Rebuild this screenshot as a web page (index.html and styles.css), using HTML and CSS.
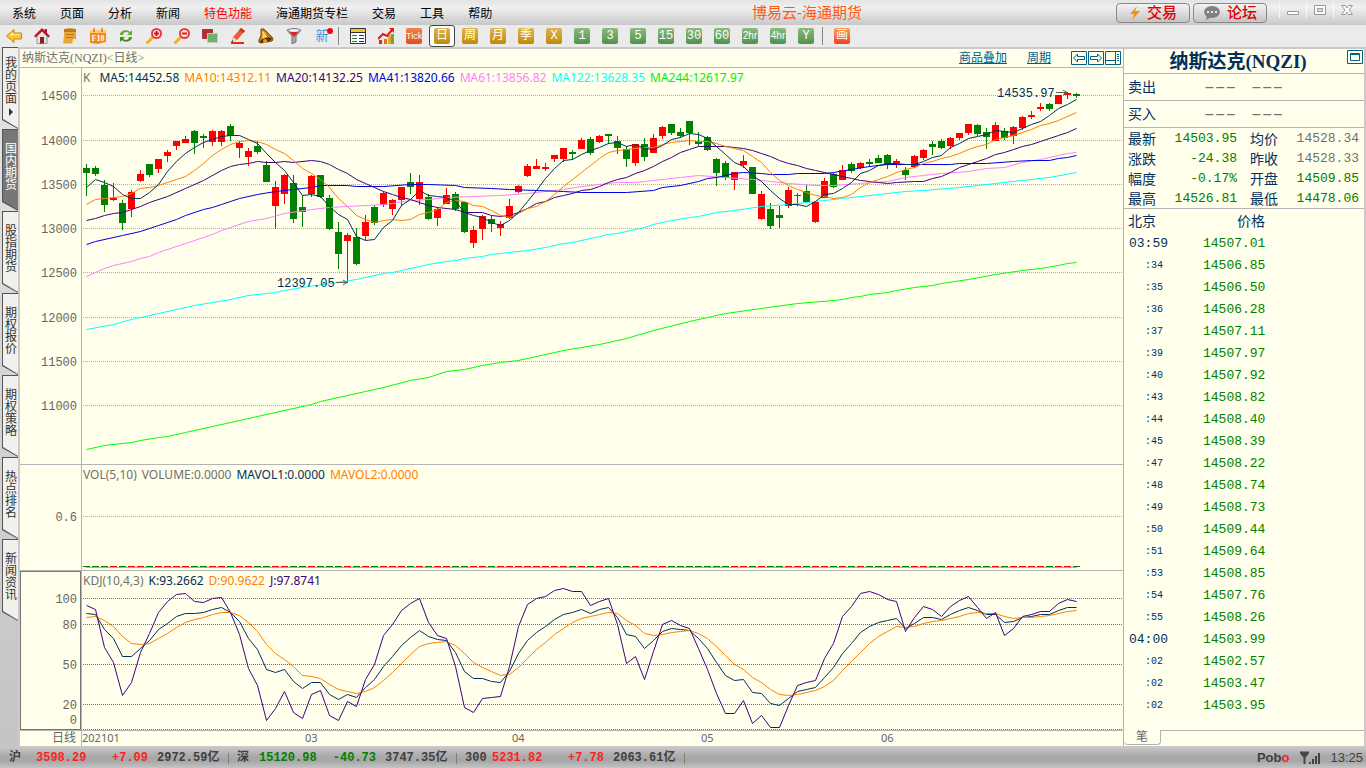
FILE: index.html
```html
<!DOCTYPE html>
<html lang="zh-CN">
<head>
<meta charset="utf-8">
<title>博易云-海通期货</title>
<link rel="stylesheet" href="styles.css">
</head>
<body>
<header class="menubar">
  <nav class="menu">
    <button>系统</button><button>页面</button><button>分析</button><button>新闻</button><button class="hot">特色功能</button><button>海通期货专栏</button><button>交易</button><button>工具</button><button>帮助</button>
  </nav>
  <h1 class="app-title">博易云-海通期货</h1>
  <div class="top-actions">
    <button class="pill"><svg width="12" height="14" viewBox="0 0 12 14"><path d="M8 0L1 8h4l-2 6 8-9H6z" fill="#f09018"/></svg>交易</button>
    <button class="pill"><svg width="18" height="14" viewBox="0 0 18 14"><ellipse cx="9" cy="6" rx="8" ry="6" fill="#808080"/><path d="M4 9l-1 5 6-3z" fill="#808080"/><path d="M4 5h2v2H4zM8 5h2v2H8zM12 5h2v2h-2z" fill="#e8e8e8"/></svg>论坛</button>
  </div>
  <div class="window-buttons">
    <button aria-label="最小化"><svg width="12" height="12" viewBox="0 0 12 12"><path d="M.5 7.500h11v3H.5z" fill="#fff" stroke="#999"/></svg></button>
    <button aria-label="还原"><svg width="12" height="12" viewBox="0 0 12 12"><path d="M.5 1.500h11v9H.5z" fill="#fff" stroke="#999"/><path d="M3.500 4.500h5v3h-5z" fill="#ddd" stroke="#999"/></svg></button>
    <button aria-label="关闭"><svg width="12" height="12" viewBox="0 0 12 12"><path d="M.5 1.500h4L6 4l1.500-2.500h4L8 6l3.500 4.500h-4L6 8l-1.500 2.500h-4L4 6z" fill="#fff" stroke="#999"/></svg></button>
  </div>
</header>

<div class="toolbar">
  <button aria-label="后退"><svg width="16" height="16" viewBox="0 0 16 16"><path d="M.5 8L8 1.500V5h7.500v6H8v3.500z" fill="#fbc52c" stroke="#c98a10"/><path d="M3 7.500L7 4v2h7v1z" fill="#ffec9a"/></svg></button>
  <button aria-label="首页"><svg width="16" height="16" viewBox="0 0 16 16"><path d="M3 8l5-5 5 5v7.500H3z" fill="#e4e4ea" stroke="#999"/><path d="M0 8L8 0l2.500 2.500V1H13v4l3 3-1.500 1.500L8 3.500 1.500 9.500z" fill="#b81a24"/><path d="M6 9h4v6.500H6z" fill="#8a2020"/></svg></button>
  <button aria-label="便签"><svg width="16" height="16" viewBox="0 0 16 16"><path d="M2 1q6-1 12 0v10l-4 4.500H3L1 15q1.500-7 1-14z" fill="#e5a93a"/><path d="M2 1q6-1 12 0v3H2z" fill="#c07a16"/><path d="M4 6.500h8M4 9.500h7" stroke="#b87818"/><path d="M10 15.500l1-4.500h3z" fill="#ffe6a0"/></svg></button>
  <button aria-label="F10"><svg width="18" height="16" viewBox="0 0 18 16"><path d="M1 2h16v12l-8 2-8-1z" fill="#ef8a1e"/><path d="M1 2h16v3H1z" fill="#ffc873"/><path d="M5 0v4M13 0v4" stroke="#a85008"/><text class="f10" x="9" y="13" text-anchor="middle">F10</text></svg></button>
  <button aria-label="刷新"><svg width="16" height="16" viewBox="0 0 16 16"><path d="M2 7c0-5 8-6 10-3l2-2v5H9l2-1.500C9 3 5 4 5 7z" fill="#5fae2c"/><path d="M14 9c0 5-8 6-10 3l-2 2V9h5l-2 1.500c2 2.500 6 1.500 6-1.500z" fill="#3f8e1c"/></svg></button>
  <button aria-label="放大"><svg width="16" height="16" viewBox="0 0 16 16"><path d="M1.500 14.500L7 9" stroke="#f5b020" stroke-width="3" stroke-linecap="round"/><circle cx="10.500" cy="5.500" r="4.500" fill="#ffeaea" stroke="#e23c3c" stroke-width="2"/><path d="M8 5.500h5M10.500 3v5" stroke="#d01818" stroke-width="2"/></svg></button>
  <button aria-label="缩小"><svg width="16" height="16" viewBox="0 0 16 16"><path d="M1.500 14.500L7 9" stroke="#f5b020" stroke-width="3" stroke-linecap="round"/><circle cx="10.500" cy="5.500" r="4.500" fill="#ffeaea" stroke="#e23c3c" stroke-width="2"/><path d="M8 5.500h5" stroke="#d01818" stroke-width="2"/></svg></button>
  <button aria-label="叠加"><svg width="16" height="16" viewBox="0 0 16 16"><path d="M.5 1.500h10v9H.5z" fill="#b82c34" stroke="#98383c"/><path d="M5.500 5.500h10v9h-10z" fill="#72ae72" stroke="#b8d4b8"/></svg></button>
  <button aria-label="画笔"><svg width="16" height="16" viewBox="0 0 16 16"><path d="M2 13l1-4 8-9 4 3-8 9z" fill="#ee5a3c"/><path d="M3 9l4 3-5 2z" fill="#f8d8a8"/><path d="M1 14l2-2v2z" fill="#333"/><path d="M11 0l4 3-2 2-4-3z" fill="#d03018"/><path d="M1 15h13" stroke="#e22c10" stroke-width="2"/></svg></button>
  <button aria-label="预警"><svg width="16" height="16" viewBox="0 0 16 16"><path d="M3 1q3-1 5 2l6 6q2 3 0 4L3 15q-3 0-2-3 3-4 2-11z" fill="#c87a14" stroke="#7a4808"/><path d="M4 3q3 0 5 6l-5 2q1-4 0-8z" fill="#ffd05c"/><ellipse cx="8" cy="12" rx="6" ry="2" transform="rotate(-14 8 12)" fill="#5a3008"/><circle cx="7" cy="13" r="2" fill="#e8a028"/></svg></button>
  <button aria-label="筛选"><svg width="16" height="16" viewBox="0 0 16 16"><path d="M1 2h14L10 8v6l-4 2V8z" fill="#a8a8a8" stroke="#707070"/><ellipse cx="8" cy="2.500" rx="6" ry="2" fill="#eee" stroke="#777"/><path d="M4 4h8L8 9z" fill="#e02020"/></svg></button>
  <button class="new-mark">新<i></i></button>
  <span class="sep"></span>
  <button aria-label="报价"><svg width="16" height="16" viewBox="0 0 16 16"><path d="M.5.500h15v15H.5z" fill="#fff" stroke="#333"/><path d="M1 1h14v3H1z" fill="#f3c22c"/><path d="M1 4.500h14" stroke="#333"/><path d="M2 7.500h5M2 10.500h5M2 13.500h5" stroke="#1a8a30" /><path d="M9 7.500h5M9 10.500h5M9 13.500h5" stroke="#1a30b0"/></svg></button>
  <button aria-label="走势"><svg width="16" height="16" viewBox="0 0 16 16"><path d="M1 12h3v4H1z" fill="#d43020"/><path d="M6 11h3v5H6z" fill="#e07020"/><path d="M10 7h3v9h-3z" fill="#e6a82a"/><path d="M13 6h3v10h-3z" fill="#6aa83a"/><path d="M0 11l5-5 4 2 5-6" fill="none" stroke="#e81818" stroke-width="2"/><path d="M11 0h5v5z" fill="#e81818"/></svg></button>
  <button class="tile tick"><b>Tick</b></button>
  <button class="tile gold on"><b>日</b></button><button class="tile gold"><b>周</b></button><button class="tile gold"><b>月</b></button><button class="tile gold"><b>季</b></button><button class="tile gold"><b>X</b></button>
  <button class="tile green"><b>1</b></button><button class="tile green"><b>3</b></button><button class="tile green"><b>5</b></button><button class="tile green"><b>15</b></button><button class="tile green"><b>30</b></button><button class="tile green"><b>60</b></button><button class="tile green hr"><b>2hr</b></button><button class="tile green hr"><b>4hr</b></button><button class="tile green"><b>Y</b></button>
  <span class="sep"></span>
  <button class="tile draw"><b>画</b></button>
</div>

<main class="main">
  <nav class="side-tabs">
    <button class="first"><span>我的页面</span><svg width="6" height="8" viewBox="0 0 6 8"><path d="M1 0l4 4-4 4z" fill="#333"/></svg></button><button class="on"><span>国内期货</span></button><button><span>股指期货</span></button><button><span>期权报价</span></button><button><span>期权策略</span></button><button><span>热点排名</span></button><button><span>新闻资讯</span></button>
  </nav>

  <section class="chart">
    <div class="chart-head">
      <h2>纳斯达克(NQZI)&lt;日线&gt;</h2>
      <div class="chart-links">
        <a href="#overlay">商品叠加</a><a href="#period">周期</a>
        <div class="head-icons">
          <button aria-label="向左"><svg width="16" height="14" viewBox="0 0 16 14"><path d="M.5.500h15v13H.5z"/><path d="M2.500 7l4-4v2.500h7v3h-7V11z"/></svg></button>
          <button aria-label="向右"><svg width="16" height="14" viewBox="0 0 16 14"><path d="M.5.500h15v13H.5z"/><path d="M13.500 7l-4-4v2.500h-7v3h7V11z"/></svg></button>
          <button aria-label="分栏"><svg width="16" height="14" viewBox="0 0 16 14"><path d="M.5.500h15v13H.5zM10.500.500v13M.5 9.500h10M12 3.500h2M12 5.500h2M12 7.500h2M12 9.500h2"/></svg></button>
        </div>
      </div>
    </div>

    <div class="panel k-panel">
      <svg class="axis" viewBox="20 68 61 396" preserveAspectRatio="none" data-ticks="14500:95 14000:140 13500:184 13000:228 12500:272 12000:317 11500:361 11000:405"></svg>
      <div class="plot">
        <p class="legend"><span>K</span><span class="c-navy wide">MA5:14452.58</span><span class="c-orange">MA10:14312.11</span><span class="c-purple">MA20:14132.25</span><span class="c-blue">MA41:13820.66</span><span class="c-pink">MA61:13856.82</span><span class="c-cyan">MA122:13628.35</span><span class="c-lime">MA244:12617.97</span></p>
        <svg id="k" viewBox="82 68 1041 396" preserveAspectRatio="none"></svg>
      </div>
    </div>
    <div class="panel vol-panel">
      <svg class="axis" viewBox="20 465 61 105" preserveAspectRatio="none" data-ticks="0.6:516"></svg>
      <div class="plot">
        <p class="legend"><span>VOL(5,10)</span><span>VOLUME:0.0000</span><span class="c-navy">MAVOL1:0.0000</span><span class="c-orange">MAVOL2:0.0000</span></p>
        <svg id="vol" viewBox="82 465 1041 105" preserveAspectRatio="none"></svg>
      </div>
    </div>
    <div class="panel kdj-panel">
      <svg class="axis" viewBox="20 571 61 159" preserveAspectRatio="none" data-ticks="100:598 80:624 50:664 20:704 0:719"></svg>
      <div class="plot">
        <p class="legend"><span>KDJ(10,4,3)</span><span class="c-navy">K:93.2662</span><span class="c-orange">D:90.9622</span><span class="c-purple">J:97.8741</span></p>
        <svg id="kdj" viewBox="82 571 1041 159" preserveAspectRatio="none"></svg>
      </div>
    </div>
    <div class="dates">
      <span class="unit">日线</span>
      <svg viewBox="82 731 1041 15" preserveAspectRatio="none"><text x="82" y="742">202101</text><text x="305" y="742">03</text><text x="512" y="742">04</text><text x="701" y="742">05</text><text x="881" y="742">06</text></svg>
    </div>
  </section>

  <aside class="quote">
    <div class="quote-title"><h2>纳斯达克(NQZI)</h2><button aria-label="展开"><svg width="16" height="14" viewBox="0 0 16 14"><path d="M.5.500h15v13H.5zM3.500 3.500h9v7h-9zM3.500 4.500h9"/></svg></button></div>
    <div class="bid"><span>卖出</span><span class="dash">–––</span><span class="dash">–––</span></div>
    <div class="bid"><span>买入</span><span class="dash">–––</span><span class="dash">–––</span></div>
    <table class="stats">
      <tr><th>最新</th><td>14503.95</td><th>均价</th><td class="flat">14528.34</td></tr>
      <tr><th>涨跌</th><td>-24.38</td><th>昨收</th><td class="flat">14528.33</td></tr>
      <tr><th>幅度</th><td>-0.17%</td><th>开盘</th><td>14509.85</td></tr>
      <tr><th>最高</th><td>14526.81</td><th>最低</th><td>14478.06</td></tr>
    </table>
    <table class="ticks">
      <thead><tr><th>北京</th><th class="price">价格</th></tr></thead>
      <tbody id="ticks"></tbody>
    </table>
    <div class="quote-foot"><button>笔</button><span></span></div>
  </aside>
</main>

<footer class="status">
  <span class="name">沪</span><span class="idx up">3598.29</span><span class="chg up">+7.09</span><span class="amt">2972.59亿</span><i></i>
  <span class="name short">深</span><span class="idx long down">15120.98</span><span class="chg down">-40.73</span><span class="amt">3747.35亿</span><i></i>
  <span class="name">300</span><span class="idx up">5231.82</span><span class="chg up">+7.78</span><span class="amt">2063.61亿</span><i></i>
  <span class="brand">Pob<em>o</em></span>
  <svg width="22" height="14" viewBox="0 0 22 14"><path d="M1 1.500h9M5.500 1v12M2 2l3.500 4L9 2" fill="none" stroke="#444" stroke-width="2"/><path d="M10 11h2v2h-2zM13 8h2v5h-2zM16 5h2v8h-2zM19 2h2v11h-2z" fill="#444"/></svg>
  <time>13:25</time>
</footer>
<script src="chart.js"></script>
</body>
</html>
```

FILE: styles.css
```css
* { box-sizing: border-box; }
body { margin: 0; height: 100vh; display: flex; flex-direction: column; overflow: hidden; background: #e9e9e9; color: #000; font: 12px/14px "Liberation Sans", "Noto Sans CJK SC", sans-serif; }
button { margin: 0; padding: 0; border: 0; background: none; color: inherit; font: inherit; }
h1, h2, p { margin: 0; font-weight: normal; }
svg { display: block; }

.menubar { flex: none; height: 25px; display: flex; align-items: center; background: linear-gradient(#e4e4e4, #f0f0f0 30%, #c8c8c8); }
.menu { display: flex; gap: 24px; padding: 2px 0 0 12px; }
.hot { color: #f00; }
.app-title { flex: 1; padding-left: 6px; text-align: center; color: #ff5a14; font-size: 15px; line-height: 20px; }
.top-actions { display: flex; gap: 3px; }
.pill { width: 74px; height: 20px; display: flex; align-items: center; justify-content: center; gap: 6px; border: 1px solid #888; border-radius: 4px; background: linear-gradient(#f4f4f4, #dcdcdc 50%, #c4c4c4); color: #e00000; font-size: 15px; font-weight: 500; }
.window-buttons { display: flex; padding: 0 6px 6px 12px; }
.window-buttons button { width: 27px; height: 16px; display: flex; align-items: center; justify-content: center; border-left: 1px solid #f8f8f8; }

.toolbar { flex: none; height: 22px; display: flex; align-items: center; background: #ebebeb; }
.toolbar button { width: 28px; height: 22px; display: flex; align-items: center; justify-content: center; }
.f10 { font: bold 8px "Liberation Serif", serif; fill: #fff; }
.sep { width: 8px; height: 18px; border-left: 1px solid #888; margin-left: 2px; margin-right: -2px; }
.new-mark { position: relative; color: #4a90d8; font-size: 13px; }
.new-mark i { position: absolute; top: 3px; right: 3px; width: 6px; height: 6px; border-radius: 50%; background: #f00; }
.tile b { width: 16px; height: 16px; border-radius: 2px; color: #fff; text-align: center; font: 12px/17px "Liberation Mono", "Noto Sans CJK SC", monospace; }
.gold b { background: linear-gradient(#dcb450, #c08a08); }
.green b { background: linear-gradient(#8cba80, #50924a); }
.tick b { background: linear-gradient(#f0824c, #e0501c); font: 9px/16px "Liberation Sans", sans-serif; }
.hr b { font: 10px/16px "Liberation Sans", sans-serif; }
.draw b { background: linear-gradient(#ffa050, #f04020); }
.toolbar .on { width: 26px; margin: 0 1px; border: 1px solid #444; border-radius: 3px; background: #fff; }

.main { flex: 1; min-height: 0; display: grid; grid-template-columns: 18px minmax(0, 1fr) 243px; }
.side-tabs { background: linear-gradient(#e4e4e4, #c4c4c4); }
.side-tabs button { width: 18px; height: 82px; padding: 14px 0 0 5px; display: flex; flex-direction: column; align-items: flex-start; justify-content: flex-start; color: #333; background: #555; clip-path: polygon(2px 0, 100% 0, 100% 100%, 2px 73px); position: relative; }
.side-tabs button::before { content: ""; position: absolute; inset: 1px 0 0 3px; background: #f0f0ec; clip-path: polygon(0 0, 100% 0, 100% 80px, 0 71px); }
.side-tabs span { position: relative; display: block; width: 12px; font-size: 12px; line-height: 12px; word-break: break-all; }
.side-tabs svg { position: relative; margin: 3px 0 0 3px; }
.side-tabs .first { padding-top: 10px; }
.side-tabs .on { color: #fff; }
.side-tabs .on::before { background: #777; }

.chart { display: flex; flex-direction: column; min-width: 0; border-top: 2px solid #d0c8c8; border-left: 2px solid #d0c8c8; background: #ffffec; }
.chart-head { flex: none; height: 19px; display: flex; align-items: center; justify-content: space-between; padding: 0 2px; border-bottom: 1px solid #b4b4b4; }
.chart-head h2 { color: #707070; font: 12px/16px "Liberation Serif", "Noto Sans CJK SC", serif; }
.chart-links { display: flex; gap: 20px; }
.chart-links a { color: #00608c; line-height: 16px; }
.head-icons { display: flex; gap: 1px; }
.head-icons svg, .quote-title svg { fill: none; stroke: #00608c; }
.panel { display: flex; min-height: 0; border-bottom: 1px solid #b4b4b4; }
.k-panel { flex: 396 1 0; }
.vol-panel { flex: 105 1 0; }
.kdj-panel { flex: 159 1 0; }
.axis { flex: none; width: 61px; height: 100%; }
.axis text { font: 12px "Liberation Mono", monospace; fill: #666; text-anchor: end; }
.kdj-panel .axis { outline: 1px solid #777; outline-offset: -1px; }
.plot { flex: 1; min-width: 0; position: relative; border-left: 1px solid #b4b4b4; }
.plot svg { width: 100%; height: 100%; }
.legend { position: absolute; top: 1px; left: 1px; display: flex; gap: 5px; color: #707070; font: 12px/17px "Noto Sans", sans-serif; white-space: nowrap; }
.wide { margin-left: 4px; }
.c-navy { color: #003060; } .c-orange { color: #ff8000; } .c-purple { color: #400080; } .c-blue { color: #0000e8; }
.c-pink { color: #ff80ff; } .c-cyan { color: #00ffff; } .c-lime { color: #00f000; }
.grid { stroke: #b0b0a4; stroke-dasharray: 1 1; shape-rendering: crispEdges; }
.grid-dark { stroke: #707070; stroke-dasharray: 1 1; shape-rendering: crispEdges; }
.up-bar { fill: #f00; } .down-bar { fill: #008000; }
.line { fill: none; stroke-width: 1; }
.mark { font: 12px "Liberation Mono", monospace; fill: #003060; }
.arrow { fill: none; stroke: #606060; }
.dates { flex: none; height: 15px; display: flex; color: #666; }
.unit { width: 61px; padding-right: 5px; text-align: right; line-height: 15px; }
.dates svg { flex: 1; min-width: 0; height: 15px; border-left: 1px solid #b4b4b4; font: 11px "Noto Sans", sans-serif; fill: #666; }

.quote { display: flex; flex-direction: column; border: solid #d0c8c8; border-width: 2px 2px 0 0; border-left: 1px solid #b4b4b4; background: #ffffec; color: #003060; }
.quote-title { height: 25px; position: relative; border-bottom: 1px solid #b4b4b4; }
.quote-title h2 { padding-right: 12px; text-align: center; font: bold 19px/25px "Liberation Serif", "Noto Sans CJK SC", serif; }
.quote-title button { position: absolute; top: 1px; right: 1px; }
.bid { height: 27px; display: grid; grid-template-columns: 76px 47px 1fr; align-items: center; padding-left: 4px; border-bottom: 1px solid #b4b4b4; font-size: 14px; line-height: 20px; }
.dash { color: #707070; font: 18px/20px "Liberation Mono", monospace; }
.stats, .ticks { border-collapse: collapse; table-layout: fixed; }
.stats th, .ticks th { padding: 1px 0 0; text-align: left; font-size: 14px; font-weight: normal; line-height: 16px; }
.stats td, .ticks td { padding: 2px 0 0; font-family: "Liberation Mono", monospace; font-size: 13px; color: #008000; }
.stats { width: 231px; margin: 0 5px 0 4px; }
.stats th { width: 35px; }
.stats td { text-align: right; }
.stats th:nth-child(3) { width: 48px; padding-left: 13px; }
.stats tr { height: 20px; }
.stats .flat { color: #707070; }
.ticks { width: 100%; border-top: 1px solid #b4b4b4; }
.ticks tr { height: 22px; }
.ticks thead tr { height: 23px; }
.ticks th { width: 79px; padding-left: 4px; }
.ticks .price { width: auto; padding-left: 34px; }
.ticks td:first-child { padding-left: 5px; color: #003060; }
.ticks .sec td:first-child { padding-left: 21px; font-size: 10px; }
.quote-foot { margin-top: auto; display: flex; height: 16px; }
.quote-foot button { width: 37px; height: 15px; border: 1px solid #b4b4b4; border-width: 0 1px 1px 0; border-radius: 0 0 4px 4px; color: #666; line-height: 14px; }
.quote-foot span { flex: 1; border-top: 1px solid #b4b4b4; }

.status { flex: none; height: 22px; display: flex; align-items: center; padding: 2px 3px 0 9px; background: linear-gradient(#cacaca, #a8a8a8 50%, #a8a8a8 70%, #c4c4c4); color: #404040; font: bold 12px/20px "Liberation Mono", "Noto Sans CJK SC", monospace; white-space: nowrap; }
.status > * { flex: none; }
.name { width: 27px; }
.short { width: 22px; }
.idx { width: 58px; }
.long { width: 63px; }
.chg { width: 54px; text-align: right; }
.amt { width: 80px; padding-left: 9px; }
.status i { width: 1px; height: 11px; margin-right: 8px; background: #808080; }
.up { color: #ff2020; } .down { color: #008000; }
.brand { margin-left: auto; margin-right: 10px; font: bold 13px/20px "Liberation Sans", sans-serif; }
.brand em { color: #f02020; font-style: normal; }
.status time { margin-left: 9px; font: 13px/20px "Liberation Sans", sans-serif; }
```

FILE: chart.js
```js
// Each bar: direction, high, body top, body bottom, low.
const bars = `g164,168,173,196 g166,168,174,176 g180,185,205,212 r183,198,200,201 g200,203,223,230 r190,192,209,217 r170,174,181,182 g164,164,175,177 r159,159,169,173 r150,152,156,162
r141,141,146,150 r136,139,143,143 g130,131,143,154 g134,136,138,148 r130,131,142,146 r130,131,142,146 g124,126,136,141 r141,143,148,158 r148,151,157,166 g141,146,152,154
g161,165,182,182 r181,187,206,229 r174,175,194,204 g175,183,219,223 g195,207,212,227 r175,176,194,197 g175,175,197,198 g195,198,229,230 g222,232,254,269 r233,235,241,283
g228,237,264,265 r215,222,236,240 g205,207,223,225 r191,193,205,207 r199,200,209,215 r187,187,200,206 g173,182,187,194 r175,182,199,205 g194,197,219,220 r207,209,218,226
r188,195,204,204 g192,194,209,211 g202,202,232,233 r226,230,243,248 r215,216,229,240 g216,219,224,232 r221,224,228,236 r199,206,218,219 r185,186,192,193 r164,166,176,177
r159,166,169,169 r163,167,169,171 r155,155,159,162 r148,148,159,162 g150,152,154,160 r138,140,149,149 g137,139,153,155 r135,136,142,143 g134,134,136,144 g136,141,148,154
g146,149,159,167 r144,144,163,166 g138,144,157,161 r134,138,153,153 r126,127,136,139 g124,124,133,135 g128,132,136,138 g121,121,133,145 g132,141,144,146 g136,137,150,151
g158,159,173,186 g161,163,178,180 r172,172,180,190 r155,161,165,168 g167,167,194,194 r191,194,219,220 g203,209,226,229 g206,215,218,228 r187,190,206,208 r193,195,196,206
g185,191,202,202 r201,202,222,223 r178,181,198,198 g173,174,187,188 r165,170,180,180 g162,164,171,173 r162,163,168,169 g159,162,164,167 g155,158,163,163 g154,155,165,169
r159,161,163,168 g167,170,175,180 r155,156,167,168 r149,150,158,160 g141,144,147,155 g139,141,148,149 r137,138,146,149 r133,133,138,140 r124,124,133,135 g124,125,134,136
g128,132,137,149 r122,125,141,141 g128,131,138,140 r126,127,136,144 r116,117,128,130 r111,115,117,119 r103,107,109,111 g103,104,109,111 r95,95,104,104 r92,93,95,99 g93,94,96,98`
  .split(/\s+/).map(s => [s[0], ...s.slice(1).split(',').map(Number)]);

// One value for every bar.
const dense = {
  ma5: '187,179,182,186,194,198,198,192,184,171,161,153,147,142,139,136,135,135,139,143,153,162,170,182,195,194,196,206,214,219,236,240,239,227,220,205,199,190,195,196,197,201,212,215,217,222,225,220,212,201,190,178,168,160,159,154,150,147,143,142,146,144,148,149,145,139,137,133,134,138,146,154,162,166,175,181,190,198,204,204,206,201,194,193,188,182,173,170,165,163,163,164,164,161,157,155,147,143,138,136,134,130,131,132,128,124,121,115,108,104,99',
  ma10: '204,199,198,197,196,193,188,187,185,182,179,176,170,163,155,149,144,141,140,141,144,149,153,160,168,173,179,187,198,206,215,219,222,220,219,220,219,214,212,209,202,200,201,205,206,210,215,217,213,208,206,201,194,186,179,172,165,158,152,150,149,148,147,147,144,142,141,140,141,141,143,146,148,150,156,162,172,180,185,189,192,195,196,198,197,194,187,182,179,176,172,169,167,163,161,158,156,153,149,146,144,139,137,135,132,129,125,123,120,116,112',
  k: '613,614,629,638,656,656,648,640,629,623,616,613,613,612,609,607,612,621,638,649,669,672,669,681,688,682,682,694,699,694,697,687,679,666,656,645,637,630,636,639,640,652,671,678,678,681,682,671,653,640,632,626,619,614,612,609,613,609,607,617,634,636,648,640,631,628,629,630,638,648,662,675,680,679,692,693,703,705,698,691,689,687,677,667,653,643,632,626,622,620,618,628,623,617,617,619,614,610,607,610,614,614,622,621,617,616,614,614,610,607,607',
  d: '617,616,620,626,636,643,644,643,638,633,627,622,619,617,614,612,612,615,622,631,644,653,659,666,675,676,678,684,689,691,693,691,687,680,672,663,654,646,643,642,641,645,653,662,667,671,675,674,667,658,649,642,634,628,622,618,616,614,612,613,620,625,633,635,634,632,631,630,633,638,646,655,664,669,677,682,689,694,695,694,692,690,686,680,670,661,652,643,636,631,626,627,626,623,621,620,618,616,613,612,613,613,616,618,617,617,616,615,613,611,610',
  j: '605,609,647,662,695,682,652,633,612,601,594,593,601,602,598,597,612,634,668,685,720,708,691,712,718,694,690,715,720,701,706,679,664,635,624,610,603,598,622,635,638,666,707,712,698,697,696,666,626,604,598,596,590,588,591,591,605,601,598,624,663,656,679,651,624,620,625,628,648,669,693,713,713,700,723,715,727,727,705,685,682,680,658,643,616,606,593,591,594,599,601,631,617,606,609,616,606,600,596,607,618,612,635,628,616,614,611,611,603,599,601'
};

// bar:value pairs, straight between them.
const sparse = {
  ma20: '0:220 1:218 2:215 3:213 4:212 5:209 6:206 7:202 9:196 11:188 13:180 15:170 16:166 17:164 18:163 19:161 20:162 21:162 22:161 23:162 25:160 26:161 27:164 28:169 29:173 30:179 31:183 32:187 33:191 34:194 35:197 36:199 37:202 38:205 39:207 41:209 42:212 44:212 45:215 46:216 47:215 48:212 49:208 50:203 51:201 52:197 53:195 54:193 55:190 56:189 57:186 58:182 59:179 60:177 61:173 62:170 63:166 64:161 65:157 66:152 67:149 68:146 71:146 72:147 73:148 74:150 75:153 76:156 77:160 78:163 79:165 80:168 81:170 82:172 83:174 84:176 85:178 86:180 87:181 88:182 89:183 90:182 92:181 93:181 94:178 95:176 96:172 97:167 98:164 99:161 100:158 101:154 102:152 103:149 104:146 105:144 106:141 107:138 108:135 109:132 110:128',
  ma41: '0:244 1:241 4:235 6:231 8:225 10:219 11:215 13:209 14:207 15:204 17:198 19:194 21:191 23:189 25:187 26:185 29:185 30:186 33:186 36:184 38:184 41:185 42:187 45:188 47:189 50:190 53:191 55:192 60:192 63:190 64:187 66:185 68:181 69:178 70:177 72:173 73:172 75:173 76:174 78:174 79:173 82:173 83:172 85:169 87:166 89:164 96:164 97:163 100:163 103:161 105:160 107:160 108:158 109:157 110:155',
  ma61: '0:276 2:268 3:265 5:261 6:258 7:256 8:252 11:243 14:234 15:230 16:227 18:221 20:218 22:213 25:209 27:207 29:206 33:204 34:203 36:200 38:199 40:197 43:196 46:195 49:193 51:191 53:189 55:186 57:184 59:182 61:182 64:179 66:177 68:175 71:177 74:179 76:181 78:183 81:185 83:185 86:183 89:181 91:177 93:175 95:173 98:171 100:168 102:167 104:162 106:159 108:155 109:153 110:152',
  ma122: '0:329 3:324 5:319 8:313 12:305 14:302 16:299 18:295 21:292 22:290 24:287 27:283 30:279 33:273 34:272 38:264 40:261 41:260 42:258 44:256 45:254 49:250 51:247 53:243 54:242 57:236 58:234 59:233 62:227 63:224 65:220 67:217 68:216 70:212 72:210 75:206 78:204 81:201 84:198 88:194 91:191 93:190 97:187 101:183 104:180 107:177 110:172',
  ma244: '0:449 2:445 5:442 6:440 8:437 9:436 11:432 14:426 17:420 25:404 26:401 33:387 36:380 38:377 40:371 42:369 44:365 46:362 48:360 53:350 57:344 60:338 63:330 67:321 71:313 75:308 79:303 83:300 84:299 85:297 86:296 87:294 89:292 90:290 92:287 94:285 95:283 98:279 101:274 104:270 106:268 108:265 109:263 110:262'
};

const barX = i => 86 + 9 * i;
const point = (i, y) => `${barX(i) + 0.5},${+y + 0.5}`;
const line = (points, color) => `<polyline class="line" stroke="${color}" points="${points}"/>`;
const denseLine = (key, color) => line(dense[key].split(',').map((y, i) => point(i, y)).join(' '), color);
const sparseLine = (key, color) => line(sparse[key].split(' ').map(p => point(...p.split(':').map(Number))).join(' '), color);
const gridLines = (ys, cls) => ys.map(y => `<path class="${cls}" d="M83 ${y + 0.5}H1123"/>`).join('');
const dir = b => b[0] === 'r' ? 'up-bar' : 'down-bar';

const candles = bars.map((b, i) => {
  const [, high, top, bottom, low] = b;
  return `<path class="${dir(b)}" d="M${barX(i)} ${high}h1V${low}h-1zM${barX(i) - 3} ${top}h7V${Math.max(bottom, top + 1)}h-7z"/>`;
}).join('');

document.getElementById('k').innerHTML = gridLines([95, 140, 184, 228, 272, 317, 361, 405], 'grid') + candles +
  sparseLine('ma244', '#00ff00') + sparseLine('ma122', '#00ffff') + sparseLine('ma61', '#ff80ff') +
  sparseLine('ma41', '#0000e8') + sparseLine('ma20', '#400080') + denseLine('ma10', '#ff8000') + denseLine('ma5', '#003060') +
  '<text class="mark" x="277" y="287">12397.05</text><path class="arrow" d="M336 282.500h11M343 280l4 2.500-4 2.500"/>' +
  '<text class="mark" x="997" y="97">14535.97</text><path class="arrow" d="M1056 92.500h11M1063 90l4 2.500-4 2.500"/>';

document.getElementById('vol').innerHTML = gridLines([516], 'grid') + '<path d="M86 567h991v1H86z" fill="#ff9a30"/>' +
  bars.map((b, i) => `<path class="${dir(b)}" d="M${barX(i) - 3} 566h7v1h-7z"/>`).join('');

document.getElementById('kdj').innerHTML = gridLines([598, 624, 664, 704, 729], 'grid-dark') +
  denseLine('k', '#003060') + denseLine('d', '#ff8000') + denseLine('j', '#400080');

document.querySelectorAll('.axis').forEach(axis => {
  axis.innerHTML = axis.dataset.ticks.split(' ').map(t => {
    const [label, y] = t.split(':');
    return `<text x="77" y="${+y + 5}">${label}</text>`;
  }).join('');
});

const trades = '03:59 14507.01|:34 14506.85|:35 14506.50|:36 14506.28|:37 14507.11|:39 14507.97|:40 14507.92|:43 14508.82|:44 14508.40|:45 14508.39|:47 14508.22|:48 14508.74|:49 14508.73|:50 14509.44|:51 14509.64|:53 14508.85|:54 14507.76|:55 14508.26|04:00 14503.99|:02 14502.57|:02 14503.47|:02 14503.95';
document.getElementById('ticks').innerHTML = trades.split('|').map(t => {
  const [time, price] = t.split(' ');
  return `<tr${time[0] === ':' ? ' class="sec"' : ''}><td>${time}</td><td>${price}</td></tr>`;
}).join('');
```
